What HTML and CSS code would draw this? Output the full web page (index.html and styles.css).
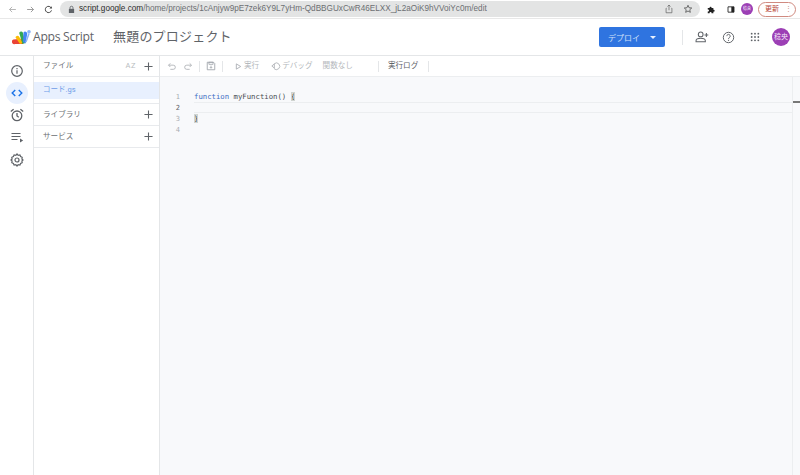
FILE: index.html
```html
<!DOCTYPE html>
<html lang="ja">
<head>
<meta charset="utf-8">
<title>Apps Script</title>
<link rel="stylesheet" href="styles.css">
</head>
<body>
<div class="chrome">
  <svg class="c-ico nav-back" viewBox="0 0 12 12"><path d="M10.5 6H2M5.5 2.5L2 6l3.5 3.5" fill="none" stroke="#a8a8a8" stroke-width="1.1"/></svg>
  <svg class="c-ico nav-fwd" viewBox="0 0 12 12"><path d="M1.5 6H10M6.5 2.5L10 6l-3.5 3.5" fill="none" stroke="#8a8a8a" stroke-width="1.1"/></svg>
  <svg class="c-ico nav-reload" viewBox="0 0 12 12"><path d="M9.8 4.2A4.2 4.2 0 1 0 10 7.2" fill="none" stroke="#444" stroke-width="1.3"/><path d="M10.4 1.6v3.2H7.2z" fill="#444"/></svg>
  <div class="url">
    <svg class="lock" viewBox="0 0 8 10"><path d="M1 4.2h6V9H1z" fill="#5f6368"/><path d="M2.3 4.2V3a1.7 1.7 0 0 1 3.4 0v1.2" fill="none" stroke="#5f6368"/></svg>
    <span class="url-text"><span class="url-host">script.google.com</span>/home/projects/1cAnjyw9pE7zek6Y9L7yHm-QdBBGUxCwR46ELXX_jL2aOiK9hVVoiYc0m/edit</span>
    <svg class="url-ico" viewBox="0 0 12 12"><path d="M3 5H2.5v5.5h7V5H9M6 7.5V1.5M4.2 3L6 1.2 7.8 3" fill="none" stroke="#666" stroke-width=".9"/></svg>
    <svg class="url-ico star" viewBox="0 0 12 12"><path d="M6 1.5l1.3 3 3.2.3-2.4 2.1.7 3.1L6 8.4 3.2 10l.7-3.1L1.5 4.8l3.2-.3z" fill="none" stroke="#555" stroke-width="1"/></svg>
  </div>
  <svg class="c-ico ext" viewBox="0 0 12 12"><path d="M1 4h2.500a1.300 1.300 0 1 1 2.500 0h2.500v2.300a1.300 1.300 0 1 1 0 2.500V11H6a1.300 1.300 0 1 0-2.500 0H1V8.500a1.300 1.300 0 1 0 0-2.500z" fill="#222"/></svg>
  <svg class="c-ico side" viewBox="0 0 12 12"><path d="M1.500 2h9v8h-9z" fill="none" stroke="#222" stroke-width="1.300"/><path d="M6.500 2h4v8h-4z" fill="#222"/></svg>
  <span class="c-avatar">稔央</span>
  <span class="update"><span>更新</span><span class="dots">⋮</span></span>
</div>

<header class="head">
  <svg class="logo" viewBox="0 0 20 16">
    <path d="M1.500 10.500L12 9.500l-1 5.500H3a2.300 2.300 0 0 1-1.500-4.500z" fill="#ea4335"/>
    <path d="M3.500 8.500a2 2 0 0 1 3.300-1.200L11 14l-3 1z" fill="#fbbc04"/>
    <path d="M7.200 4a2 2 0 0 1 3.600-.6L13.500 14l-3 1z" fill="#34a853"/>
    <path d="M11.500 3.500a2.100 2.100 0 0 1 3.800 1L13.500 14.500 11 13z" fill="#4285f4"/>
    <circle cx="17" cy="2.800" r="1.800" fill="#8ab4f8"/>
    <path d="M17 4.500L14 13" stroke="#8ab4f8" stroke-width="1.500"/>
  </svg>
  <span class="brand">Apps Script</span>
  <span class="project">無題のプロジェクト</span>
  <span class="spacer"></span>
  <button class="deploy"><span>デプロイ</span><i class="caret"></i></button>
  <span class="head-sep"></span>
  <svg class="h-ico" viewBox="0 0 16 16"><circle cx="6.500" cy="5" r="2.700" fill="none" stroke="#5f6368" stroke-width="1.200"/><path d="M1.200 13.500v-1.200c0-1.800 3-2.800 5.300-2.800s5.300 1 5.300 2.800v1.200z" fill="none" stroke="#5f6368" stroke-width="1.200"/><path d="M13 3.500v4.500M10.800 5.700h4.400" stroke="#5f6368" stroke-width="1.200"/></svg>
  <svg class="h-ico help" viewBox="0 0 16 16"><circle cx="8" cy="8" r="6.400" fill="none" stroke="#5f6368" stroke-width="1.200"/><path d="M5.900 6.300a2.100 2.100 0 1 1 3.200 1.800c-.8.500-1.100.9-1.100 1.700" fill="none" stroke="#5f6368" stroke-width="1.200"/><circle cx="8" cy="11.500" r=".8" fill="#5f6368"/></svg>
  <svg class="h-ico apps" viewBox="0 0 12 12" fill="#5f6368"><circle cx="2" cy="2" r="1.100"/><circle cx="6" cy="2" r="1.100"/><circle cx="10" cy="2" r="1.100"/><circle cx="2" cy="6" r="1.100"/><circle cx="6" cy="6" r="1.100"/><circle cx="10" cy="6" r="1.100"/><circle cx="2" cy="10" r="1.100"/><circle cx="6" cy="10" r="1.100"/><circle cx="10" cy="10" r="1.100"/></svg>
  <span class="avatar">稔央</span>
</header>

<main class="body">
  <nav class="rail">
    <svg class="r-ico" viewBox="0 0 16 20"><circle cx="8" cy="10" r="5.300" fill="none" stroke="#5f6368" stroke-width="1.200"/><path d="M8 9.200v3.600M8 7v1.200" stroke="#5f6368" stroke-width="1.200"/></svg>
    <span class="r-active"><svg viewBox="0 0 16 16"><path d="M6 4.500L2.500 8 6 11.500M10 4.500L13.500 8 10 11.500" fill="none" stroke="#1a73e8" stroke-width="1.600"/></svg></span>
    <svg class="r-ico" viewBox="0 0 16 20"><circle cx="8" cy="10.800" r="4.800" fill="none" stroke="#5f6368" stroke-width="1.300"/><path d="M8 8v3l1.800 1.200M1.800 6.500l2.800-2.300M14.200 6.500l-2.800-2.300" fill="none" stroke="#5f6368" stroke-width="1.300"/></svg>
    <svg class="r-ico" viewBox="0 0 16 20"><path d="M2.500 6.500h9M2.500 9.500h9M2.500 12.500h6" stroke="#5f6368" stroke-width="1.200"/><path d="M11 11.500l3.200 2-3.200 2z" fill="#5f6368"/></svg>
    <svg class="r-ico" viewBox="0 0 16 20"><path d="M8 4l1.200 1.300 1.700-.3.700 1.600 1.600.7-.3 1.700L14 10l-1.100 1 .3 1.700-1.600.7-.7 1.600-1.700-.3L8 16l-1.200-1.300-1.700.3-.7-1.600-1.600-.7.3-1.700L2 10l1.100-1-.3-1.700 1.600-.7.700-1.600 1.700.3z" fill="none" stroke="#5f6368" stroke-width="1.200"/><circle cx="8" cy="10" r="2" fill="none" stroke="#5f6368" stroke-width="1.200"/></svg>
  </nav>

  <aside class="files">
    <div class="f-head">
      <span class="f-title">ファイル</span>
      <span class="az">AZ</span>
      <svg class="plus" viewBox="0 0 10 10"><path d="M5 .5v9M.5 5h9" stroke="#5f6368" stroke-width="1.200"/></svg>
    </div>
    <div class="f-list"><div class="f-item">コード.gs</div></div>
    <div class="f-sec">
      <span class="f-title">ライブラリ</span>
      <svg class="plus" viewBox="0 0 10 10"><path d="M5 .5v9M.5 5h9" stroke="#5f6368" stroke-width="1.200"/></svg>
    </div>
    <div class="f-sec">
      <span class="f-title">サービス</span>
      <svg class="plus" viewBox="0 0 10 10"><path d="M5 .5v9M.5 5h9" stroke="#5f6368" stroke-width="1.200"/></svg>
    </div>
  </aside>

  <section class="main">
    <div class="tools">
      <svg class="t-ico" viewBox="0 0 12 12"><path d="M2 5h5.500a2.500 2.500 0 0 1 0 5H4M4 2.800L1.800 5 4 7.200" fill="none" stroke="#a9adb2" stroke-width="1"/></svg>
      <svg class="t-ico redo" viewBox="0 0 12 12"><path d="M10 5H4.500a2.500 2.500 0 0 0 0 5H8M8 2.800L10.200 5 8 7.200" fill="none" stroke="#a9adb2" stroke-width="1"/></svg>
      <span class="t-sep s1"></span>
      <svg class="t-ico save" viewBox="0 0 12 12"><path d="M1.500 1.500h7.500l1.500 1.500v7.500h-9z" fill="none" stroke="#9aa0a6" stroke-width="1"/><path d="M3.500 1.500h5v2.500h-5zM6 5.500v3M4.500 7.200L6 8.700l1.500-1.500" fill="none" stroke="#9aa0a6" stroke-width=".9"/></svg>
      <span class="t-sep s2"></span>
      <svg class="t-run" viewBox="0 0 8 8"><path d="M1.500 1l5 3-5 3z" fill="none" stroke="#a9adb2" stroke-width="1"/></svg>
      <span class="t-label run">実行</span>
      <svg class="t-debug" viewBox="0 0 12 12"><path d="M4 3.200A4 4 0 1 1 3.500 9" fill="none" stroke="#a9adb2" stroke-width="1"/><path d="M1 6l3-2.500v5z" fill="none" stroke="#a9adb2" stroke-width="1"/></svg>
      <span class="t-label debug">デバッグ</span>
      <span class="t-label none">関数なし</span>
      <span class="t-sep s3"></span>
      <span class="t-log">実行ログ</span>
      <span class="t-sep s4"></span>
    </div>
    <div class="editor">
      <div class="gutter">
        <div class="ln">1</div><div class="ln cur">2</div><div class="ln">3</div><div class="ln">4</div>
      </div>
      <div class="code">
        <div class="cl"><span class="kw">function</span> myFunction() <span class="br">{</span></div>
        <div class="cl active"></div>
        <div class="cl"><span class="br">}</span></div>
        <div class="cl"></div>
      </div>
      <div class="minimap"><i class="mark"></i></div>
    </div>
  </section>
</main>
</body>
</html>
```
FILE: styles.css
```css
* { box-sizing: border-box; }
html, body { margin: 0; height: 100%; }
body {
  width: 800px; height: 475px; overflow: hidden; background: #fff;
  font-family: "Roboto", "Noto Sans CJK JP", sans-serif;
  display: flex; flex-direction: column; color: #5f6368;
}
svg { display: block; flex: none; }

.chrome { height: 19px; display: flex; align-items: center; padding: 0 4px 0 8px; border-bottom: 1px solid #e8e8e8; background: #fff; flex: none; }
.c-ico { width: 9px; height: 9px; }
.nav-fwd { margin-left: 9px; }
.nav-reload { margin-left: 9px; }
.url { margin-left: 7px; width: 640px; height: 16px; border-radius: 8px; background: #e3e4e4; display: flex; align-items: center; padding: 0 7px 0 8px; }
.lock { width: 7px; height: 9px; margin-right: 4px; }
.url-text { flex: 1; font: 8.2px/16px "Liberation Sans", sans-serif; color: #6c6f72; white-space: nowrap; overflow: hidden; }
.url-host { color: #2c2c2c; }
.url-ico { width: 10px; height: 10px; }
.star { margin-left: 9px; }
.ext { margin-left: 7px; }
.side { margin-left: 11px; width: 8px; }
.c-avatar { margin-left: 6px; width: 12px; height: 12px; border-radius: 50%; background: #9c3fb5; color: #fff; font-size: 4px; line-height: 12px; text-align: center; flex: none; }
.update { margin-left: 5px; width: 38px; height: 15px; border: 1px solid #d08a80; border-radius: 8px; color: #b8483a; font-size: 7px; line-height: 13px; padding-left: 6px; display: flex; gap: 6px; white-space: nowrap; flex: none; }
.dots { color: #c98a80; }

.head { height: 37px; display: flex; align-items: center; border-bottom: 1px solid #e4e6e8; padding: 0 10px 0 12px; flex: none; }
.logo { width: 20px; height: 16px; margin-bottom: 1px; }
.brand { margin-left: 1px; margin-bottom: 2px; font: 12.2px "Open Sans", sans-serif; letter-spacing: -.3px; color: #5f6368; width: 61px; white-space: nowrap; }
.project { margin-left: 19px; margin-bottom: 3px; font-size: 13px; letter-spacing: .2px; color: #5f6368; }
.spacer { flex: 1; }
.deploy { width: 66px; height: 20px; border: 0; border-radius: 2px; background: #2f74e0; color: #cfe0fa; font-family: inherit; font-size: 8px; display: flex; align-items: center; padding: 0 9px; justify-content: space-between; }
.caret { width: 0; height: 0; border: 3px solid transparent; border-top: 3px solid #e8f0fe; border-bottom: 0; margin-right: 0; }
.head-sep { width: 1px; height: 15px; background: #e4e6e8; margin: 0 12px 0 17px; }
.h-ico { width: 14px; height: 14px; }
.help { margin-left: 13px; width: 13px; height: 13px; }
.apps { margin-left: 15px; width: 10px; height: 10px; }
.avatar { margin-left: 12px; width: 18px; height: 18px; border-radius: 50%; background: #9c3fb5; color: #f3e4f7; font-size: 7px; line-height: 18px; text-align: center; }

.body { flex: 1; display: flex; min-height: 0; }
.rail { width: 34px; border-right: 1px solid #e4e6e8; display: flex; flex-direction: column; align-items: center; padding-top: 5px; gap: 2px; flex: none; }
.r-ico { width: 16px; height: 20px; }
.r-ico:last-child { margin-top: 1px; }
.r-active { width: 22px; height: 22px; border-radius: 50%; background: #e8f0fe; display: flex; align-items: center; justify-content: center; margin: -1px 0; flex: none; }
.r-active svg { width: 14px; height: 14px; }

.files { width: 126px; border-right: 1px solid #e4e6e8; flex: none; }
.f-head { height: 21px; display: flex; align-items: center; padding: 0 6px 0 9px; border-bottom: 1px solid #e8eaed; }
.f-title { flex: 1; font-size: 7.6px; line-height: 10px; color: #6b6f73; }
.az { font-size: 7.5px; line-height: 10px; color: #b8bcc0; margin-right: 8px; white-space: nowrap; letter-spacing: .6px; }
.plus { width: 9px; height: 9px; }
.f-list { padding-top: 5px; height: 27px; border-bottom: 1px solid #e8eaed; }
.f-item { height: 17px; background: #e8f0fe; color: #6f9de8; font-size: 7.5px; line-height: 15px; padding-left: 9px; }
.f-sec { height: 22px; display: flex; align-items: center; padding: 0 6px 0 9px; border-bottom: 1px solid #e8eaed; }

.main { flex: 1; display: flex; flex-direction: column; min-width: 0; }
.tools { height: 21px; display: flex; align-items: center; padding-left: 7px; border-bottom: 1px solid #eceef0; flex: none; }
.t-ico { width: 10px; height: 10px; }
.redo { margin-left: 6px; }
.t-sep { width: 1px; height: 11px; background: #e4e6e8; flex: none; }
.s1 { margin-left: 6px; }
.save { margin-left: 6px; }
.s2 { margin-left: 6px; }
.t-run { width: 7px; height: 7px; margin-left: 12px; }
.t-label { font-size: 7.6px; line-height: 10px; color: #b4b8bc; white-space: nowrap; }
.run { margin-left: 2px; }
.t-debug { width: 10px; height: 10px; margin-left: 12px; }
.debug { margin-left: 1px; }
.none { margin-left: 10px; }
.s3 { margin-left: 25px; }
.t-log { margin-left: 9px; font-size: 7.6px; line-height: 10px; color: #5f6368; white-space: nowrap; }
.s4 { margin-left: 10px; }

.editor { flex: 1; background: #f8f9fb; display: flex; padding-top: 14px; min-height: 0; }
.gutter { width: 20px; text-align: right; flex: none; padding-top: 1px; }
.ln { height: 11px; font: 7px/11px "DejaVu Sans Mono", monospace; color: #a9adb2; }
.ln.cur { color: #5f6368; }
.code { flex: 1; margin-left: 14px; font: 7.3px/11px "DejaVu Sans Mono", monospace; color: #4a4f54; min-width: 0; }
.cl { height: 11px; white-space: pre; }
.cl.active { border-top: 1px solid #eceef0; border-bottom: 1px solid #eceef0; }
.kw { color: #3f6fc4; }
.br { background: #dfe3e0; outline: 1px solid #d0d4d0; outline-offset: -1px; color: #444; }
.minimap { width: 8px; flex: none; border-left: 1px solid #eceef0; margin-top: -14px; padding-top: 24px; }
.mark { display: block; height: 2px; background: #777; }
```
